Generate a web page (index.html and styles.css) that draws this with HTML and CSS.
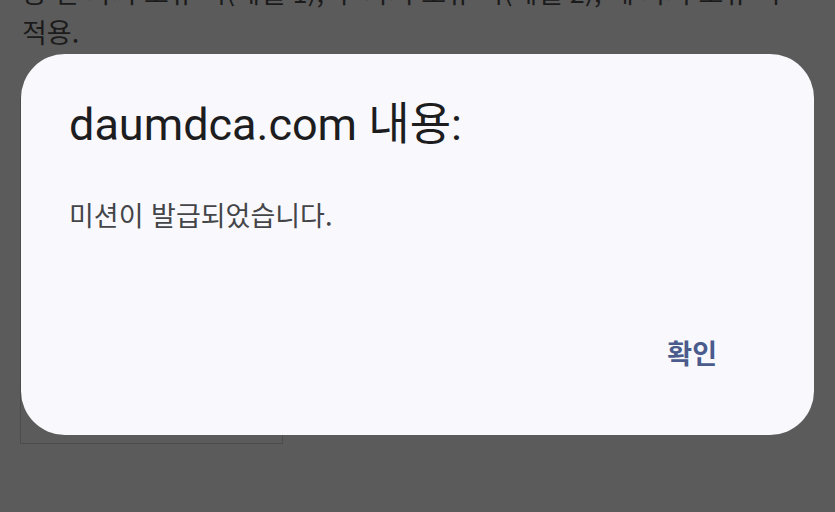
FILE: index.html
```html
<!DOCTYPE html>
<html lang="ko">
<head>
  <meta charset="UTF-8">
  <title>daumdca.com</title>
  <link rel="stylesheet" href="styles.css">
</head>
<body>
  <div class="page">
    <p class="notice">중 한 가지 보유 시(레벨 1), 두 가지 보유 시(레벨 2), 세 가지 보유 시<br>적용.</p>
    <div class="figure"></div>
  </div>

  <div class="dialog">
    <h1 class="dialog-title">daumdca.com 내용:</h1>
    <p class="dialog-message">미션이 발급되었습니다.</p>
    <div class="dialog-actions">
      <button class="dialog-btn">확인</button>
    </div>
  </div>
</body>
</html>
```

FILE: styles.css
```css
body {
  margin: 0;
  background: #5b5b5b;
  font-family: Roboto, "Noto Sans CJK KR", sans-serif;
  overflow: hidden;
}

.page {
  padding: 0 22px;
  margin-top: -28px;
}

.notice {
  margin: 0;
  font-family: "Noto Sans CJK KR", sans-serif;
  font-size: 27px;
  line-height: 40px;
  color: #1b1b1b;
  white-space: nowrap;
}

.figure {
  margin-top: 45px;
  margin-left: -2px;
  width: 261px;
  height: 345px;
  border: 1px solid #4c4c4c;
}

.dialog {
  position: absolute;
  left: 21px;
  top: 54px;
  width: 793px;
  height: 381px;
  box-sizing: border-box;
  padding: 44px 97px 65px 48px;
  background: #f8f8fd;
  border-radius: 44px;
  display: flex;
  flex-direction: column;
}

.dialog-title {
  margin: 0;
  font-weight: 400;
  font-size: 45px;
  line-height: 54px;
  color: #1d1d1f;
}

.dialog-message {
  margin: 45px 0 0 0;
  font-family: "Noto Sans CJK KR", sans-serif;
  font-size: 27px;
  line-height: 36px;
  color: #444548;
}

.dialog-actions {
  margin-top: auto;
  display: flex;
  justify-content: flex-end;
}

.dialog-btn {
  background: none;
  border: none;
  padding: 0;
  font-family: "Noto Sans CJK KR", sans-serif;
  font-size: 27px;
  font-weight: 700;
  line-height: 34px;
  color: #4a5b8c;
  cursor: pointer;
}
```
